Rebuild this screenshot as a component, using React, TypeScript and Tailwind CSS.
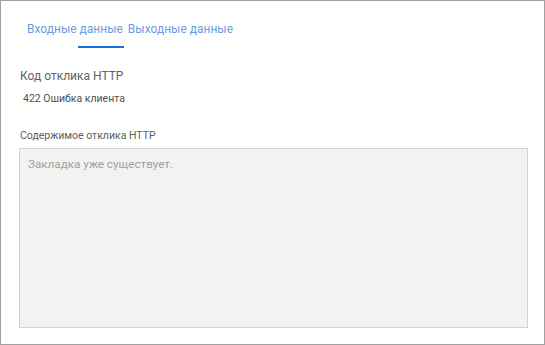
import React from "react";

export default function App() {
  return (
    <div className="w-[545px] h-[345px] border border-[#a0a0a0] bg-white font-['Roboto',sans-serif] overflow-hidden">
      <div className="flex pl-[26px] pt-[19px] text-[12px] leading-[18px] text-[#6b9be0] gap-[5px]">
        <div>
          Входные{" "}
          <span className="relative">
            данные
            <span className="absolute left-[-2px] right-[-1px] top-[24px] h-[2px] bg-[#1a6fdf]" />
          </span>
        </div>
        <div>Выходные данные</div>
      </div>
      <div className="px-[18px] flex flex-col">
        <div className="mt-[29px] pl-[1px] text-[12px] leading-[18px] text-[#636363]">Код отклика HTTP</div>
        <div className="mt-[7px] pl-[4px] text-[10.5px] leading-[14px] text-[#505050]">422 Ошибка клиента</div>
        <div className="mt-[23px] pl-[1px] text-[10.5px] leading-[14px] text-[#5e5e5e]">Содержимое отклика HTTP</div>
        <div className="mt-[5px] w-[509px] h-[180px] border border-[#d2d2d2] bg-[#f2f2f2] pl-[8px] pt-[7px] text-[11.7px] leading-[16px] text-[#a0a0a0]">
          Закладка уже существует.
        </div>
      </div>
    </div>
  );
}
